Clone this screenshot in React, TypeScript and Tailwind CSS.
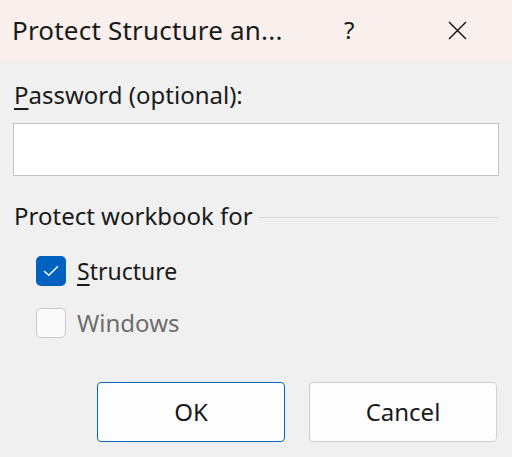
export default function App() {
  return (
    <div
      className="w-[512px] h-[457px] bg-[#f0f0f0] text-[#1a1a1a] overflow-hidden"
      style={{ fontFamily: '"Segoe UI", "Noto Sans", sans-serif' }}
    >
      {/* Title bar */}
      <div className="h-[60px] bg-[#f9efec] flex items-center">
        <span className="ml-[12px] w-[332px] text-[26px] leading-none tracking-[0.2px]">Protect Structure an...</span>
        <span className="text-[24px] leading-none w-[104px]">?</span>
        <svg width="19" height="19" viewBox="0 0 19 19" fill="none">
          <path d="M1 1 L18 18 M18 1 L1 18" stroke="#1a1a1a" strokeWidth="1.5" />
        </svg>
      </div>

      {/* Body */}
      <div className="px-[13px] pt-[19px]">
        <div className="text-[24px] leading-[32px] ml-[1px]">
          <span className="underline underline-offset-[4px]">P</span>assword (optional):
        </div>
        <div className="mt-[12px] h-[53px] bg-white border border-[#c3c3c3]" />

        <div className="mt-[24px] flex items-center gap-[6px]">
          <span className="text-[24px] leading-[32px] ml-[1px]">Protect workbook for</span>
          <div className="flex-1 h-px bg-[#dadada] mt-[2px]" />
        </div>

        <div className="mt-[24px] ml-[23px] flex flex-col gap-[22px]">
          <div className="flex items-center gap-[11px]">
            <div className="w-[30px] h-[30px] rounded-[5px] bg-[#0062be] flex items-center justify-center">
              <svg width="16" height="12" viewBox="0 0 16 12" fill="none">
                <path d="M1.5 6.5 L5.8 10.3 L14.5 1.8" stroke="white" strokeWidth="1.5" strokeLinecap="round" strokeLinejoin="round" />
              </svg>
            </div>
            <span className="text-[23px] leading-[30px]">
              <span className="underline underline-offset-[4px]">S</span>tructure
            </span>
          </div>
          <div className="flex items-center gap-[11px]">
            <div className="w-[30px] h-[30px] rounded-[5px] bg-[#fafafa] border border-[#c8c8c8]" />
            <span className="text-[24px] leading-[30px] text-[#6d6d6d]">Windows</span>
          </div>
        </div>

        <div className="mt-[44px] ml-[84px] flex gap-[24px]">
          <button className="w-[188px] h-[60px] bg-[#fdfdfd] border border-[#0067c0] rounded-[4px] text-[24px] text-[#1a1a1a]">
            OK
          </button>
          <button className="w-[188px] h-[60px] bg-[#fdfdfd] border border-[#d0d0d0] rounded-[4px] text-[24px] text-[#1a1a1a]">
            Cancel
          </button>
        </div>
      </div>
    </div>
  );
}
